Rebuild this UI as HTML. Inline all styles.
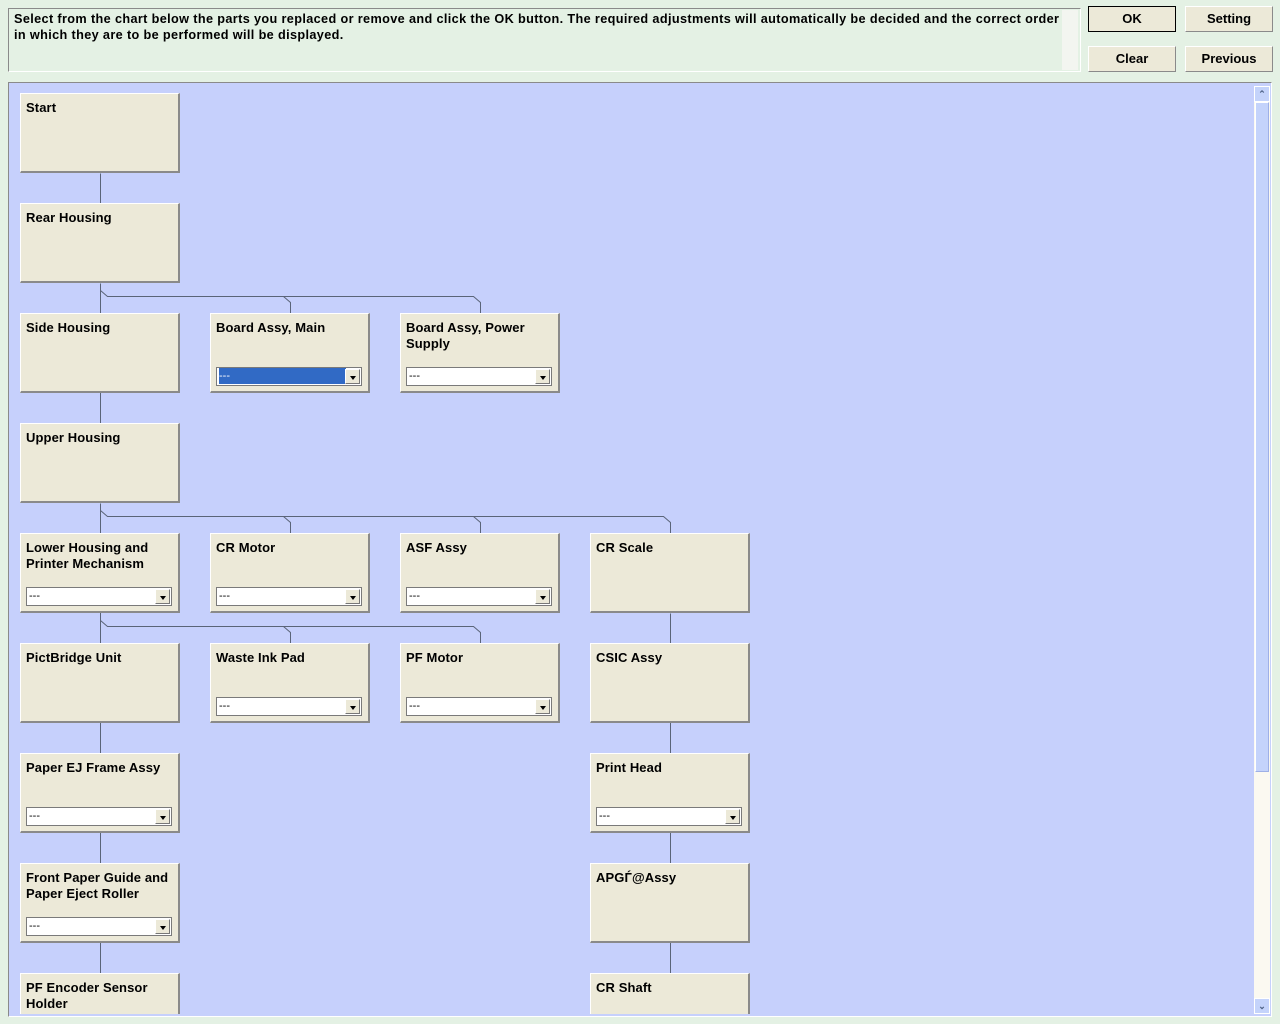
<!DOCTYPE html>
<html><head><meta charset="utf-8"><style>
*{margin:0;padding:0;box-sizing:border-box}
body{width:1280px;height:1024px;background:#e4f1e4;font-family:"Liberation Sans",Arial,sans-serif;font-size:13px;font-weight:bold;color:#000;position:relative;overflow:hidden}
.msg{position:absolute;left:8px;top:8px;width:1073px;height:64px;border:1px solid #8a8a8a;border-right-color:#fff;border-bottom-color:#fff;background:#e4f1e4;padding:2px 0 0 5px;line-height:16px;font-size:12.7px;letter-spacing:.36px;white-space:nowrap}
.msb{position:absolute;right:2px;top:1px;width:16px;height:60px;background:#f3f5f0}
.btn{position:absolute;width:88px;height:26px;background:#ece9d8;border:1px solid #fff;border-right-color:#8a8a8a;border-bottom-color:#8a8a8a;text-align:center;line-height:24px;font-size:13px}
.panel{position:absolute;left:8px;top:82px;width:1264px;height:935px;background:#c6d0fc;border:1px solid #8a8a8a;border-right-color:#fff;border-bottom-color:#fff}
.box{position:absolute;width:160px;height:80px;background:#ece9d8;border:1px solid #fff;border-right:2px solid #8a8a8a;border-bottom:2px solid #8a8a8a;padding:6px 0 0 5px;line-height:16px;font-size:13px;letter-spacing:.1px}
.sel{position:absolute;left:5px;top:53px;width:146px;height:19px;background:#fff;border:1px solid #7a7a7a;font-weight:normal;font-size:11px;line-height:16px;padding-left:2px;letter-spacing:0}
.sel.hl span{background:#316ac5;color:#fff;display:inline-block;width:127px}
.sel i{position:absolute;right:1px;top:1px;width:15px;height:15px;background:#ece9d8;border:1px solid #fff;border-right-color:#777;border-bottom-color:#777}
.sel i:after{content:"";position:absolute;left:4px;top:6px;border:3px solid transparent;border-top:4px solid #000}
.sb{position:absolute;left:1245px;top:3px;width:16px;height:928px;background:#fbf9f1}
.th{position:absolute;left:1px;top:16px;width:14px;height:670px;background:#c4d3fb;border:1px solid #fff;border-right-color:#9eb0e6;border-bottom-color:#9eb0e6}
.ar{position:absolute;left:0;width:16px;height:16px;background:#c4d3fb;border:1px solid #fff;color:#4d6185;font-size:9px;text-align:center;line-height:14px}
</style></head><body>
<div class="msg">Select from the chart below the parts you replaced or remove and click the OK button. The required adjustments will automatically be decided and the correct order<br>in which they are to be performed will be displayed.<div class="msb"></div></div>
<div class="btn" style="left:1088px;top:6px;border:1px solid #000">OK</div>
<div class="btn" style="left:1185px;top:6px">Setting</div>
<div class="btn" style="left:1088px;top:46px">Clear</div>
<div class="btn" style="left:1185px;top:46px">Previous</div>
<div class="panel">
<svg width="1244" height="933" style="position:absolute;left:0;top:0" fill="none" stroke="#5a6478" stroke-width="1">
<g transform="translate(-8.5,-82.5)">
<path d="M100 173V203M100 283V423M100 503V973"/>
<path d="M100 290l7 6H283l7 6v11M283 296H473l7 6v11"/>
<path d="M100 510l7 6H663l7 6v11M283 516l7 6v11M473 516l7 6v11"/>
<path d="M100 620l7 6H473l7 6v11M283 626l7 6v11"/>
<path d="M670 613V973"/>
</g></svg>
<div class="sb"><div class="ar" style="top:0">&#8963;</div><div class="th"></div><div class="ar" style="top:912px">&#8964;</div></div>
</div>
<div style="position:absolute;left:0;top:0">
<div class="box" style="left:20px;top:93px">Start</div>
<div class="box" style="left:20px;top:203px">Rear Housing</div>
<div class="box" style="left:20px;top:313px">Side Housing</div>
<div class="box" style="left:210px;top:313px">Board Assy, Main<div class="sel hl"><span>---</span><i></i></div></div>
<div class="box" style="left:400px;top:313px">Board Assy, Power Supply<div class="sel">---<i></i></div></div>
<div class="box" style="left:20px;top:423px">Upper Housing</div>
<div class="box" style="left:20px;top:533px">Lower Housing and Printer Mechanism<div class="sel">---<i></i></div></div>
<div class="box" style="left:210px;top:533px">CR Motor<div class="sel">---<i></i></div></div>
<div class="box" style="left:400px;top:533px">ASF Assy<div class="sel">---<i></i></div></div>
<div class="box" style="left:590px;top:533px">CR Scale</div>
<div class="box" style="left:20px;top:643px">PictBridge Unit</div>
<div class="box" style="left:210px;top:643px">Waste Ink Pad<div class="sel">---<i></i></div></div>
<div class="box" style="left:400px;top:643px">PF Motor<div class="sel">---<i></i></div></div>
<div class="box" style="left:590px;top:643px">CSIC Assy</div>
<div class="box" style="left:20px;top:753px">Paper EJ Frame Assy<div class="sel">---<i></i></div></div>
<div class="box" style="left:590px;top:753px">Print Head<div class="sel">---<i></i></div></div>
<div class="box" style="left:20px;top:863px;padding-right:4px">Front Paper Guide and Paper Eject Roller<div class="sel">---<i></i></div></div>
<div class="box" style="left:590px;top:863px">APGЃ@Assy</div>
<div class="box" style="left:20px;top:973px;height:41px;border-bottom:none">PF Encoder Sensor Holder</div>
<div class="box" style="left:590px;top:973px;height:41px;border-bottom:none">CR Shaft</div>
</div>
</body></html>
